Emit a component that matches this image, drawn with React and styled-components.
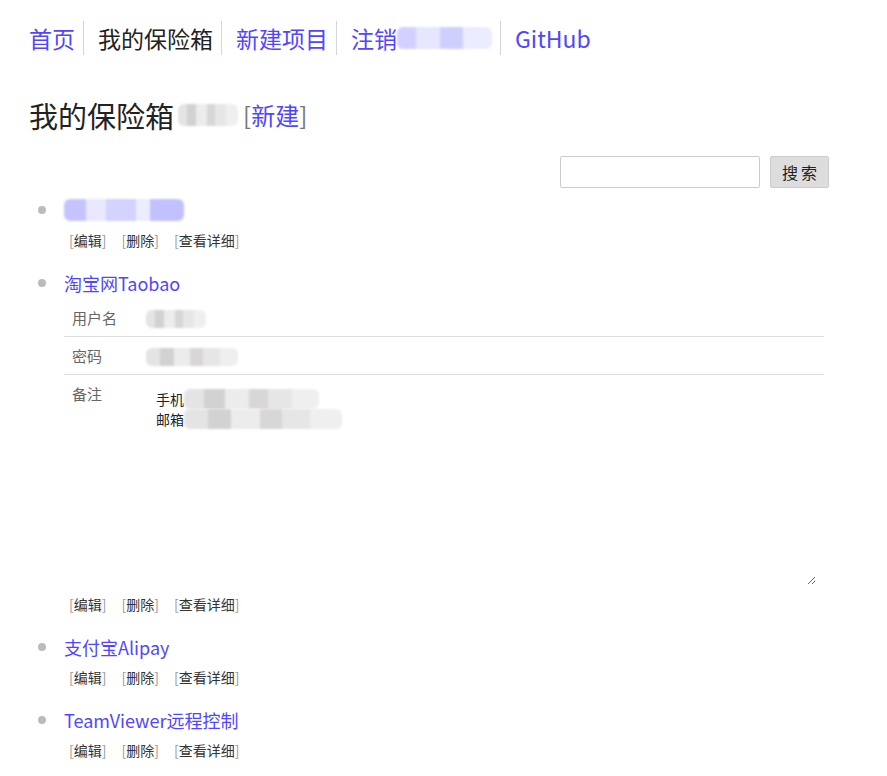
import React from 'react';
import styled, { createGlobalStyle } from 'styled-components';

const GlobalStyle = createGlobalStyle`
  body {
    margin: 0;
    background: #fff;
    font-family: "Noto Sans CJK SC", "Noto Sans", sans-serif;
    color: #222;
  }
`;

const LINK = '#5146ff';

const Page = styled.div`
  width: 887px;
  padding: 0 58px 0 29px;
  box-sizing: border-box;
`;

const Nav = styled.nav`
  display: flex;
  align-items: stretch;
  padding-top: 21px;
  height: 34px;
`;

const NavItem = styled.a`
  display: flex;
  align-items: center;
  font-size: 23px;
  line-height: 34px;
  color: ${p => (p.$current ? '#222' : LINK)};
  text-decoration: none;
  padding: 0 8px 0 14px;
  border-left: 1px solid #d6d6d6;
  &:first-child {
    padding-left: 0;
    border-left: none;
  }
`;

const Blur = styled.span`
  display: inline-block;
  vertical-align: middle;
  width: ${p => p.$w}px;
  height: ${p => p.$h || 18}px;
  border-radius: 6px;
  filter: blur(1px);
  background: ${p =>
    p.$tone === 'blue'
      ? 'linear-gradient(90deg, #c6c4ff 0 18%, #e9e8ff 18% 35%, #d4d2ff 35% 60%, #ececff 60% 72%, #c2c0ff 72% 100%)'
      : p.$tone === 'lblue'
      ? 'linear-gradient(90deg, #d2d0ff 0 20%, #e6e6ff 20% 45%, #cfcfff 45% 70%, #ececff 70% 100%)'
      : 'linear-gradient(90deg, #e4e4e4 0 15%, #d2d2d2 15% 30%, #ececec 30% 48%, #d8d6d6 48% 62%, #e6e6e6 62% 80%, #efefef 80% 100%)'};
`;

const Heading = styled.h1`
  margin: 40px 0 0;
  display: flex;
  align-items: center;
  font-size: 29px;
  font-weight: normal;
  line-height: 40px;
  color: #222;
`;

const NewLink = styled.span`
  font-size: 24px;
  color: #777;
  margin-left: 5px;
  a {
    color: ${LINK};
    text-decoration: none;
  }
`;

const SearchRow = styled.form`
  display: flex;
  justify-content: flex-end;
  gap: 10px;
  margin-top: 21px;
`;

const SearchInput = styled.input`
  width: 200px;
  height: 32px;
  box-sizing: border-box;
  border: 1px solid #ccc;
  border-radius: 2px;
  outline: none;
`;

const SearchButton = styled.button`
  width: 59px;
  height: 32px;
  box-sizing: border-box;
  border: 1px solid #ccc;
  border-radius: 2px;
  background: #ddd;
  font-family: inherit;
  font-size: 16px;
  color: #222;
  letter-spacing: 3px;
  padding: 0 0 0 3px;
`;

const List = styled.ul`
  margin: 9px 0 0;
  padding: 0 0 0 35px;
  list-style: none;
`;

const Item = styled.li`
  position: relative;
  margin-bottom: 18px;
  &::before {
    content: '';
    position: absolute;
    left: -26px;
    top: 9px;
    width: 8px;
    height: 8px;
    border-radius: 50%;
    background: #bbb;
  }
`;

const Title = styled.a`
  display: flex;
  align-items: center;
  height: 26px;
  font-size: 18px;
  color: ${LINK};
  text-decoration: none;
`;

const Actions = styled.div`
  display: flex;
  gap: 15px;
  margin-top: 5px;
  padding-left: 5px;
  font-size: 14px;
  line-height: 24px;
  color: #999;
  a {
    color: #333;
    text-decoration: none;
  }
`;

const Details = styled.table`
  width: 760px;
  margin-top: 3px;
  border-collapse: collapse;
  font-size: 15px;
  td {
    padding: 0 8px;
    vertical-align: middle;
  }
  tr + tr td {
    border-top: 1px solid #ddd;
  }
`;

const Label = styled.td`
  width: 60px;
  color: #666;
  height: 37px;
  ${p => p.$top && 'vertical-align: top !important; padding-top: 8px !important;'}
`;

const Note = styled.textarea`
  display: block;
  width: 668px;
  height: 204px;
  margin: 6px 0 2px 2px;
  box-sizing: border-box;
  border: none;
  outline: none;
  padding: 8px 8px;
  font-family: inherit;
  font-size: 14px;
  line-height: 20px;
  color: #222;
  resize: both;
`;

const NoteLine = styled.div`
  display: flex;
  align-items: center;
  font-size: 14px;
  line-height: 20px;
`;

const NoteBox = styled.div`
  position: relative;
`;

const NoteText = styled.div`
  position: absolute;
  left: 10px;
  top: 8px;
  pointer-events: none;
`;

function ActionLinks() {
  return (
    <Actions>
      <span>[<a href="#">编辑</a>]</span>
      <span>[<a href="#">删除</a>]</span>
      <span>[<a href="#">查看详细</a>]</span>
    </Actions>
  );
}

export default function App() {
  return (
    <Page>
      <GlobalStyle />
      <Nav>
        <NavItem href="#">首页</NavItem>
        <NavItem $current>我的保险箱</NavItem>
        <NavItem href="#">新建项目</NavItem>
        <NavItem href="#">注销<Blur $w={95} $h={22} $tone="lblue" /></NavItem>
        <NavItem href="#">GitHub</NavItem>
      </Nav>

      <Heading>
        我的保险箱
        <Blur $w={60} $h={22} style={{ marginLeft: 4 }} />
        <NewLink>[<a href="#">新建</a>]</NewLink>
      </Heading>

      <SearchRow onSubmit={e => e.preventDefault()}>
        <SearchInput type="text" />
        <SearchButton type="submit">搜索</SearchButton>
      </SearchRow>

      <List>
        <Item>
          <Title href="#"><Blur $w={120} $h={22} $tone="blue" /></Title>
          <ActionLinks />
        </Item>

        <Item>
          <Title href="#">淘宝网Taobao</Title>
          <Details>
            <tbody>
              <tr>
                <Label>用户名</Label>
                <td><Blur $w={60} /></td>
              </tr>
              <tr>
                <Label>密码</Label>
                <td><Blur $w={92} /></td>
              </tr>
              <tr>
                <Label $top>备注</Label>
                <td>
                  <NoteBox>
                    <Note defaultValue="" />
                    <NoteText>
                      <NoteLine>手机<Blur $w={135} $h={20} /></NoteLine>
                      <NoteLine>邮箱<Blur $w={158} $h={20} /></NoteLine>
                    </NoteText>
                  </NoteBox>
                </td>
              </tr>
            </tbody>
          </Details>
          <ActionLinks />
        </Item>

        <Item>
          <Title href="#">支付宝Alipay</Title>
          <ActionLinks />
        </Item>

        <Item>
          <Title href="#">TeamViewer远程控制</Title>
          <ActionLinks />
        </Item>
      </List>
    </Page>
  );
}
